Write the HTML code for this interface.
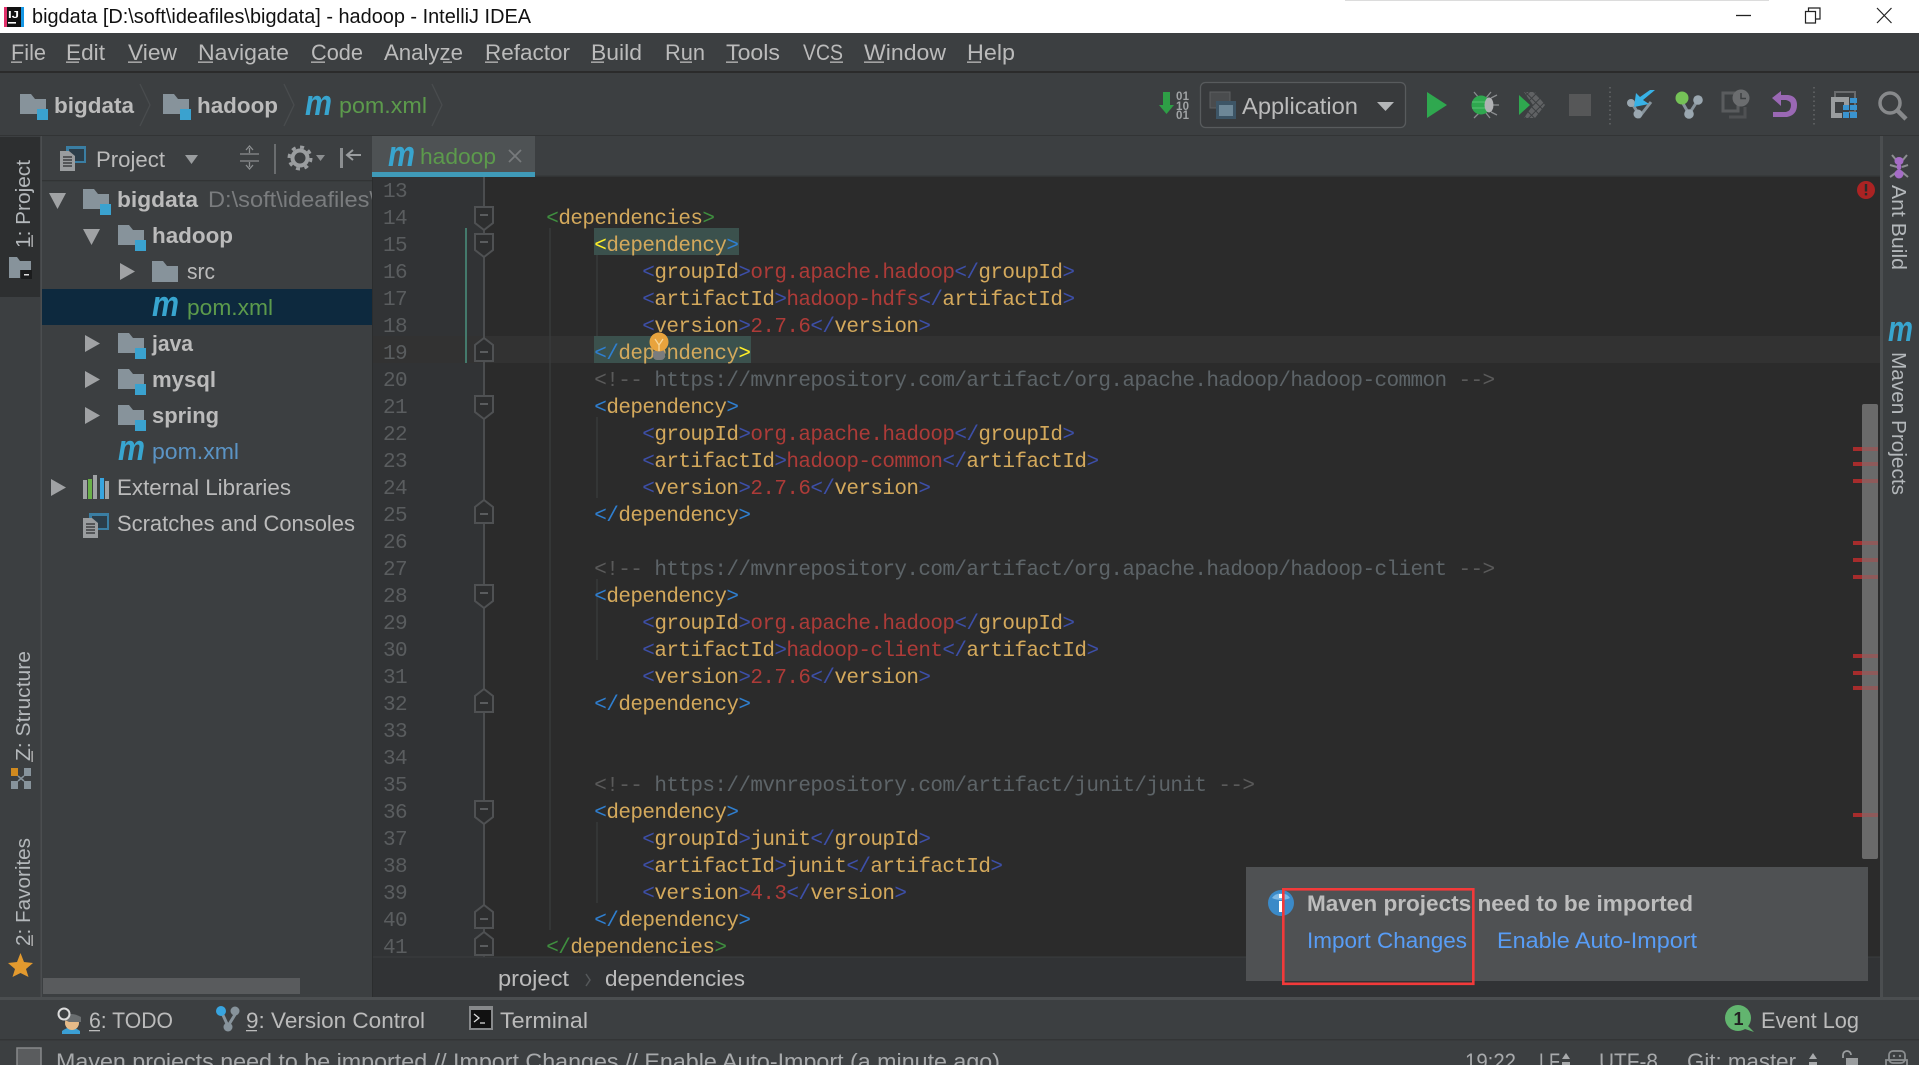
<!DOCTYPE html>
<html><head><meta charset="utf-8"><title>bigdata - hadoop - IntelliJ IDEA</title>
<style>
html,body{margin:0;padding:0;background:#3c3f41;width:1919px;height:1065px;overflow:hidden}
svg{display:block;filter:blur(.35px)}
text{font-family:"Liberation Sans",sans-serif;fill:#bbbbbb;font-size:22px;white-space:pre}
.b{font-weight:700}
.side{font-size:20px;fill:#b4b8bb}
.c{font-family:"Liberation Mono",monospace;font-size:21px;letter-spacing:-.6px;fill:#d4a95c}
.n{font-family:"Liberation Mono",monospace;font-size:21px;letter-spacing:-.6px;fill:#5a5d5f}
.g{fill:#3f8f3f}.bl{fill:#2f7fd0}.i{fill:#3d4fa8}.r{fill:#ad3b38}.y{fill:#ffef28}.k{fill:#5d6468}.kk{fill:#5a5a5a}
.m{font-style:italic;font-weight:700;font-size:36px;fill:#38a5cf}
.gf{fill:#5c9a4c}
</style></head>
<body>
<svg xmlns="http://www.w3.org/2000/svg" width="1919" height="1065" viewBox="0 0 1919 1065">
<defs>
<symbol id="fold" viewBox="0 0 28 27" width="28" height="27">
<path d="M0 1H11L15 6H26V16H17V21H0Z" fill="#87939b"/><rect x="17" y="16" width="11" height="11" fill="#3aa2cf"/>
</symbol>
<symbol id="pfold" viewBox="0 0 26 21" width="26" height="21">
<path d="M0 0H11L15 5H26V21H0Z" fill="#87939b"/>
</symbol>
<symbol id="scr" viewBox="0 0 27 26" width="27" height="26">
<rect x="6" y="1" width="20" height="17" fill="#3a7ea3"/><rect x="9" y="4" width="15" height="12" fill="#2c3e4a"/>
<path d="M0 6H9L15 11V26H0Z" fill="#9a9d9f"/><path d="M3 12H12M3 15H12M3 18H12M3 21H12" stroke="#3c3f41" stroke-width="1.5"/>
</symbol>
<symbol id="fs" viewBox="0 0 20 25" width="20" height="25">
<path d="M1 1H19V17L10 24L1 17Z" fill="#2d2e2f" stroke="#4f5153" stroke-width="2"/><path d="M6 9H14" stroke="#5a5c5e" stroke-width="2"/>
</symbol>
<symbol id="fe" viewBox="0 0 20 25" width="20" height="25">
<path d="M1 24H19V8L10 1L1 8Z" fill="#2d2e2f" stroke="#4f5153" stroke-width="2"/><path d="M6 15H14" stroke="#5a5c5e" stroke-width="2"/>
</symbol>
<pattern id="hatch" width="6" height="6" patternUnits="userSpaceOnUse" patternTransform="rotate(45)">
<rect width="6" height="6" fill="#606264"/><path d="M0 0H6M0 0V6" stroke="#3c3f41" stroke-width="2"/>
</pattern>
</defs>

<!-- title bar -->
<rect width="1919" height="33" fill="#fff"/>
<rect x="1345" y="0" width="424" height="1" fill="#dcdcdc"/>
<rect x="4" y="7" width="20" height="20" fill="#111"/>
<path d="M4 27V7h3v20z" fill="#e0306a"/><path d="M24 7v20h-3V7z" fill="#1597e5"/>
<text x="8" y="18" style="font-size:10px;fill:#fff;font-weight:700" textLength="11" lengthAdjust="spacingAndGlyphs">IJ</text>
<rect x="8" y="22" width="8" height="1.6" fill="#fff"/>
<text x="32" y="23" style="font-size:20px;fill:#111" textLength="499" lengthAdjust="spacingAndGlyphs">bigdata [D:\soft\ideafiles\bigdata] - hadoop - IntelliJ IDEA</text>
<path d="M1736 15.5H1751" stroke="#222" stroke-width="1.3"/>
<path d="M1805.5 11.5h10v11.5h-10zM1808.5 11.5v-3.5h11.5v11h-4" fill="none" stroke="#222" stroke-width="1.2"/>
<path d="M1877 8L1891.500 23M1891.500 8L1877 23" stroke="#222" stroke-width="1.2"/>

<!-- menu bar -->
<rect x="0" y="33" width="1919" height="39" fill="#3c3f41"/>
<rect x="0" y="71" width="1919" height="2" fill="#2b2b2b"/>
<g>
<text x="11" y="60" textLength="35" lengthAdjust="spacingAndGlyphs">File</text><rect x="11" y="61.500" width="11" height="1.300" fill="#bbb"/>
<text x="66" y="60" textLength="39" lengthAdjust="spacingAndGlyphs">Edit</text><rect x="66" y="61.500" width="13" height="1.300" fill="#bbb"/>
<text x="128" y="60" textLength="49" lengthAdjust="spacingAndGlyphs">View</text><rect x="128" y="61.500" width="14" height="1.300" fill="#bbb"/>
<text x="198" y="60" textLength="91" lengthAdjust="spacingAndGlyphs">Navigate</text><rect x="198" y="61.500" width="15" height="1.300" fill="#bbb"/>
<text x="311" y="60" textLength="52" lengthAdjust="spacingAndGlyphs">Code</text><rect x="311" y="61.500" width="14" height="1.300" fill="#bbb"/>
<text x="384" y="60" textLength="79" lengthAdjust="spacingAndGlyphs">Analyze</text><rect x="443" y="61.500" width="9" height="1.300" fill="#bbb"/>
<text x="485" y="60" textLength="85" lengthAdjust="spacingAndGlyphs">Refactor</text><rect x="485" y="61.500" width="13" height="1.300" fill="#bbb"/>
<text x="591" y="60" textLength="51" lengthAdjust="spacingAndGlyphs">Build</text><rect x="591" y="61.500" width="13" height="1.300" fill="#bbb"/>
<text x="665" y="60" textLength="40" lengthAdjust="spacingAndGlyphs">Run</text><rect x="680" y="61.500" width="12" height="1.300" fill="#bbb"/>
<text x="726" y="60" textLength="54" lengthAdjust="spacingAndGlyphs">Tools</text><rect x="726" y="61.500" width="12" height="1.300" fill="#bbb"/>
<text x="803" y="60" textLength="40" lengthAdjust="spacingAndGlyphs">VCS</text><rect x="830" y="61.500" width="13" height="1.300" fill="#bbb"/>
<text x="864" y="60" textLength="82" lengthAdjust="spacingAndGlyphs">Window</text><rect x="864" y="61.500" width="20" height="1.300" fill="#bbb"/>
<text x="967" y="60" textLength="48" lengthAdjust="spacingAndGlyphs">Help</text><rect x="967" y="61.500" width="14" height="1.300" fill="#bbb"/>
</g>

<!-- toolbar -->
<rect x="0" y="73" width="1919" height="62" fill="#3c3f41"/>
<rect x="0" y="135" width="1919" height="1.500" fill="#323435"/>
<use href="#fold" x="20" y="93"/>
<text x="54" y="113" class="b" textLength="80" lengthAdjust="spacingAndGlyphs">bigdata</text>
<path d="M140 84L150 105L140 126" fill="none" stroke="#494c4e" stroke-width="1.300"/>
<use href="#fold" x="163" y="93"/>
<text x="197" y="113" class="b" textLength="81" lengthAdjust="spacingAndGlyphs">hadoop</text>
<path d="M284 84L294 105L284 126" fill="none" stroke="#494c4e" stroke-width="1.300"/>
<text x="305" y="115" class="m" textLength="27" lengthAdjust="spacingAndGlyphs">m</text>
<text x="339" y="113" class="gf" textLength="88" lengthAdjust="spacingAndGlyphs">pom.xml</text>
<path d="M432 84L442 105L432 126" fill="none" stroke="#494c4e" stroke-width="1.300"/>

<path d="M1163 92h7v13h4l-7.500 9l-7.500 -9h4z" fill="#2e9e46"/>
<text x="1176" y="100" style="font-size:11.500px;font-weight:700;fill:#a0a3a5" textLength="13">01</text>
<text x="1176" y="110" style="font-size:11.500px;font-weight:700;fill:#a0a3a5" textLength="13">10</text>
<text x="1176" y="119" style="font-size:11.500px;font-weight:700;fill:#a0a3a5" textLength="13">01</text>

<rect x="1200.500" y="82.500" width="205" height="45" rx="5" fill="#383a3c" stroke="#585b5d" stroke-width="1.300"/>
<rect x="1210" y="92" width="20" height="16" fill="#4a4c4e" stroke="#5d5f61"/>
<rect x="1216" y="101" width="20" height="18" fill="#3d5566"/><rect x="1219" y="105" width="14" height="11" fill="#6d8797"/>
<text x="1242" y="114" textLength="116" lengthAdjust="spacingAndGlyphs" style="font-size:23px">Application</text>
<path d="M1377 102H1394L1385.500 111Z" fill="#b4b6b8"/>

<path d="M1427 92V118L1447 105Z" fill="#2fa84f"/>
<g>
<path d="M1474 92l5 6M1491 92l-5 6M1474 118l5 -5M1490 118l-4 -5M1491 98l6 -3M1493 105h6M1491 112l6 3" stroke="#8a8d8f" stroke-width="1.300" fill="none"/>
<circle cx="1481" cy="105" r="9.500" fill="#2fa84f"/>
<path d="M1472 102H1487M1472 108H1487" stroke="#57c273" stroke-width="1"/>
<ellipse cx="1489" cy="105" rx="4.500" ry="7.500" fill="#b0b2b4"/>
</g>
<path d="M1519 95V115L1530 105Z" fill="#2fa84f"/>
<path d="M1524 92H1535L1545 105L1535 118H1524L1533 105Z" fill="url(#hatch)"/>
<rect x="1569" y="94" width="22" height="22" fill="#565758"/>
<path d="M1610 87V125" stroke="#6a6d6f" stroke-width="1.300" stroke-dasharray="1.500 3"/>

<path d="M1631 102L1640 116L1651 102" stroke="#87939b" stroke-width="3" fill="none"/>
<circle cx="1631" cy="103" r="4" fill="#9aa7b0"/><circle cx="1638" cy="114" r="4.500" fill="#9aa7b0"/>
<path d="M1655 90L1643 100L1649 104L1634 107L1636 93L1640 97L1650 90Z" fill="#38b2e6"/>

<path d="M1681 100L1689 114L1698 100" stroke="#87939b" stroke-width="3" fill="none"/>
<circle cx="1682" cy="98" r="6.500" fill="#75c257"/><circle cx="1698" cy="100" r="4.800" fill="#9aa7b0"/><circle cx="1689" cy="114" r="4.800" fill="#9aa7b0"/>

<rect x="1723" y="93" width="15" height="18" fill="none" stroke="#5a5c5e" stroke-width="3"/>
<path d="M1729 117H1745V107" fill="none" stroke="#4f5153" stroke-width="3"/>
<circle cx="1741" cy="98" r="8.500" fill="#6b6d6f"/><path d="M1741 93V98.500H1746" stroke="#3c3f41" stroke-width="1.500" fill="none"/>

<path d="M1772 98L1781 91V95H1788Q1797 96 1797 105Q1797 115 1787 117H1773V112H1786Q1791 111 1791 105Q1791 101 1786 100H1781V106Z" fill="#9a68b4"/>
<path d="M1814 87V125" stroke="#6a6d6f" stroke-width="1.300" stroke-dasharray="1.500 3"/>

<rect x="1835" y="92" width="20" height="20" fill="none" stroke="#6a6c6e" stroke-width="2"/>
<rect x="1831" y="97" width="18" height="21" fill="#9a9d9f"/><rect x="1835" y="102" width="9" height="11" fill="#3c3f41"/>
<rect x="1842" y="108" width="7" height="10" fill="#3c3f41"/>
<path d="M1850 98h7v5h-7zM1850 105h7v5h-7zM1843 112h6v6h-6zM1850 112h7v6h-7zM1843 105h6v5h-6z" fill="#3a94d0"/>

<circle cx="1890" cy="103" r="10" fill="none" stroke="#87898b" stroke-width="3.500"/>
<path d="M1897 110L1906 119" stroke="#87898b" stroke-width="4.500"/>

<!-- left stripe -->
<rect x="0" y="136" width="41" height="864" fill="#3c3f41"/>
<rect x="0" y="137" width="40" height="160" fill="#2d2f30"/>
<rect x="40.500" y="136" width="1.500" height="864" fill="#4b4e50"/>
<text transform="translate(30,248) rotate(-90)" class="side" textLength="88" lengthAdjust="spacingAndGlyphs">1: Project</text>
<rect x="31.500" y="235" width="1.300" height="12" fill="#bbb"/>
<path d="M9 257H17L20 261H31V270H20V278H9Z" fill="#87939b"/><rect x="21" y="270" width="11" height="9" fill="#1b1c1d"/><rect x="24" y="274" width="5" height="1.500" fill="#ddd"/>

<text transform="translate(30,761) rotate(-90)" class="side" textLength="110" lengthAdjust="spacingAndGlyphs">Z: Structure</text>
<rect x="31.500" y="751" width="1.300" height="11" fill="#bbb"/>
<path d="M11 768h7v8h-7z" fill="#d08a1f"/><path d="M24 768h7v8h-7zM11 781h7v8h-7zM24 781h7v8h-7z" fill="#87939b"/><path d="M18 776l6 5M24 776l-6 5" stroke="#87939b" stroke-width="1.500"/>

<text transform="translate(30,946) rotate(-90)" class="side" textLength="108" lengthAdjust="spacingAndGlyphs">2: Favorites</text>
<rect x="31.500" y="935" width="1.300" height="11" fill="#bbb"/>
<path d="M20.500 953L24 962L33 963L26 969L28.500 977L20.500 973L12.500 977L15 969L8 963L17 962Z" fill="#e39a2e"/>

<!-- project panel -->
<rect x="42" y="136" width="330" height="861" fill="#3c3f41"/>
<rect x="42" y="180" width="330" height="1.300" fill="#323435"/>
<use href="#scr" x="60" y="145"/>
<text x="96" y="167" textLength="69" lengthAdjust="spacingAndGlyphs">Project</text>
<path d="M185 155H198L191.500 164Z" fill="#9a9d9f"/>
<path d="M240 154H259M240 161H259M249.500 148V153M249.500 162V167M246 150L249.500 146L253 150M246 165L249.500 169L253 165" stroke="#8b8e90" stroke-width="1.300" fill="none"/>
<rect x="274" y="144" width="2" height="30" fill="#6a6d6f"/>
<circle cx="300" cy="158" r="7.500" fill="none" stroke="#9a9d9f" stroke-width="4"/>
<circle cx="300" cy="158" r="11" fill="none" stroke="#9a9d9f" stroke-width="3" stroke-dasharray="4 4.600"/>
<path d="M316 155H325L320.500 161Z" fill="#8b8e90"/>
<rect x="340" y="148" width="3" height="20" fill="#8b8e90"/>
<path d="M361 155H348M353 150L347 155L353 160" stroke="#9a9d9f" stroke-width="2" fill="none"/>

<rect x="42" y="289" width="330" height="36" fill="#0d293e"/>
<path d="M49 193H66L57.500 209Z" fill="#a0a2a4"/>
<use href="#fold" x="83" y="188"/>
<text x="117" y="207" class="b" textLength="81" lengthAdjust="spacingAndGlyphs">bigdata</text>
<text x="208" y="207" style="fill:#7a7c7e" textLength="168" lengthAdjust="spacingAndGlyphs">D:\soft\ideafiles\</text>
<rect x="372" y="180" width="6" height="40" fill="#313335"/>
<path d="M83 229H100L91.500 245Z" fill="#a0a2a4"/>
<use href="#fold" x="118" y="224"/>
<text x="152" y="243" class="b" textLength="81" lengthAdjust="spacingAndGlyphs">hadoop</text>
<path d="M120 263V280L135 271.500Z" fill="#a0a2a4"/>
<use href="#pfold" x="152" y="261"/>
<text x="187" y="279" textLength="28" lengthAdjust="spacingAndGlyphs">src</text>
<text x="152" y="316" class="m" textLength="27" lengthAdjust="spacingAndGlyphs">m</text>
<text x="187" y="315" class="gf" textLength="86" lengthAdjust="spacingAndGlyphs">pom.xml</text>
<path d="M85 335V352L100 343.500Z" fill="#a0a2a4"/>
<use href="#fold" x="118" y="332"/>
<text x="152" y="351" class="b" textLength="41" lengthAdjust="spacingAndGlyphs">java</text>
<path d="M85 371V388L100 379.500Z" fill="#a0a2a4"/>
<use href="#fold" x="118" y="368"/>
<text x="152" y="387" class="b" textLength="64" lengthAdjust="spacingAndGlyphs">mysql</text>
<path d="M85 407V424L100 415.500Z" fill="#a0a2a4"/>
<use href="#fold" x="118" y="404"/>
<text x="152" y="423" class="b" textLength="67" lengthAdjust="spacingAndGlyphs">spring</text>
<text x="118" y="460" class="m" textLength="27" lengthAdjust="spacingAndGlyphs">m</text>
<text x="152" y="459" style="fill:#5b94c5" textLength="87" lengthAdjust="spacingAndGlyphs">pom.xml</text>
<path d="M51 479V496L66 487.500Z" fill="#a0a2a4"/>
<path d="M83 480h4v19h-4z" fill="#a0a3a5"/><path d="M88 479h4v20h-4z" fill="#6ab04a"/><path d="M93 475h4v24h-4z" fill="#a0a3a5"/><path d="M100 478h4v21h-4z" fill="#38a5e0"/><path d="M105 481h4v18h-4z" fill="#a0a3a5"/>
<text x="117" y="495" textLength="174" lengthAdjust="spacingAndGlyphs">External Libraries</text>
<use href="#scr" x="83" y="512"/>
<text x="117" y="531" textLength="238" lengthAdjust="spacingAndGlyphs">Scratches and Consoles</text>
<rect x="43" y="978" width="257" height="16" fill="#595b5d"/>

<!-- tabs -->
<rect x="372" y="136" width="1508" height="41" fill="#3c3f41"/>
<rect x="372" y="175.500" width="1508" height="1.500" fill="#323435"/>
<rect x="372" y="136" width="163" height="36" fill="#4e5254"/>
<rect x="372" y="172" width="163" height="5" fill="#3f9ab8"/>
<text x="388" y="166" class="m" textLength="27" lengthAdjust="spacingAndGlyphs">m</text>
<text x="420" y="164" class="gf" textLength="76" lengthAdjust="spacingAndGlyphs">hadoop</text>
<path d="M509 150L521 162M521 150L509 162" stroke="#777a7c" stroke-width="1.800"/>

<!-- editor -->
<rect x="372" y="177" width="1508" height="780" fill="#2b2b2b"/>
<rect x="372" y="177" width="112" height="780" fill="#313335"/>
<rect x="372" y="177" width="1" height="820" fill="#2b2d2e"/>
<rect x="372" y="336" width="1508" height="27" fill="#323232"/>
<path d="M484 177V957" stroke="#4b4d4f" stroke-width="2"/>
<rect x="465" y="228" width="2" height="135" fill="#447a6c"/>
<path d="M550 228V930" stroke="#3a3c3d" stroke-width="1.300"/>
<path d="M597 255V336M597 417V498M597 579V660M597 822V903" stroke="#3a3c3d" stroke-width="1.300"/>
<rect x="594" y="228" width="145" height="27" fill="#3b514d"/>
<rect x="594" y="336" width="157" height="27" fill="#3b514d"/>

<use href="#fs" x="474" y="206"/><use href="#fs" x="474" y="233"/><use href="#fe" x="474" y="337"/>
<use href="#fs" x="474" y="395"/><use href="#fe" x="474" y="499"/>
<use href="#fs" x="474" y="584"/><use href="#fe" x="474" y="688"/>
<use href="#fs" x="474" y="800"/><use href="#fe" x="474" y="904"/><use href="#fe" x="474" y="931"/>

<g transform="translate(0,-1)">
<text class="n" x="383" y="198">13</text><text class="n" x="383" y="225">14</text><text class="n" x="383" y="252">15</text><text class="n" x="383" y="279">16</text><text class="n" x="383" y="306">17</text><text class="n" x="383" y="333">18</text><text class="n" x="383" y="360">19</text><text class="n" x="383" y="387">20</text><text class="n" x="383" y="414">21</text><text class="n" x="383" y="441">22</text><text class="n" x="383" y="468">23</text><text class="n" x="383" y="495">24</text><text class="n" x="383" y="522">25</text><text class="n" x="383" y="549">26</text><text class="n" x="383" y="576">27</text><text class="n" x="383" y="603">28</text><text class="n" x="383" y="630">29</text><text class="n" x="383" y="657">30</text><text class="n" x="383" y="684">31</text><text class="n" x="383" y="711">32</text><text class="n" x="383" y="738">33</text><text class="n" x="383" y="765">34</text><text class="n" x="383" y="792">35</text><text class="n" x="383" y="819">36</text><text class="n" x="383" y="846">37</text><text class="n" x="383" y="873">38</text><text class="n" x="383" y="900">39</text><text class="n" x="383" y="927">40</text><text class="n" x="383" y="954">41</text>
</g>

<g transform="translate(-.7,-1)">
<text class="c" x="547" y="225"><tspan class="g">&lt;</tspan>dependencies<tspan class="g">&gt;</tspan></text>
<text class="c" x="595" y="252"><tspan class="y">&lt;</tspan>dependency<tspan class="bl">&gt;</tspan></text>
<text class="c" x="643" y="279"><tspan class="i">&lt;</tspan>groupId<tspan class="i">&gt;</tspan><tspan class="r">org.apache.hadoop</tspan><tspan class="i">&lt;/</tspan>groupId<tspan class="i">&gt;</tspan></text>
<text class="c" x="643" y="306"><tspan class="i">&lt;</tspan>artifactId<tspan class="i">&gt;</tspan><tspan class="r">hadoop-hdfs</tspan><tspan class="i">&lt;/</tspan>artifactId<tspan class="i">&gt;</tspan></text>
<text class="c" x="643" y="333"><tspan class="i">&lt;</tspan>version<tspan class="i">&gt;</tspan><tspan class="r">2.7.6</tspan><tspan class="i">&lt;/</tspan>version<tspan class="i">&gt;</tspan></text>
<text class="c" x="595" y="360"><tspan class="bl">&lt;/</tspan>dependency<tspan class="y">&gt;</tspan></text>
<text class="c k" x="595" y="387" style="fill:#5d6468"><tspan class="kk">&lt;!--</tspan> https://mvnrepository.com/artifact/org.apache.hadoop/hadoop-common <tspan class="kk">--&gt;</tspan></text>
<text class="c" x="595" y="414"><tspan class="bl">&lt;</tspan>dependency<tspan class="bl">&gt;</tspan></text>
<text class="c" x="643" y="441"><tspan class="i">&lt;</tspan>groupId<tspan class="i">&gt;</tspan><tspan class="r">org.apache.hadoop</tspan><tspan class="i">&lt;/</tspan>groupId<tspan class="i">&gt;</tspan></text>
<text class="c" x="643" y="468"><tspan class="i">&lt;</tspan>artifactId<tspan class="i">&gt;</tspan><tspan class="r">hadoop-common</tspan><tspan class="i">&lt;/</tspan>artifactId<tspan class="i">&gt;</tspan></text>
<text class="c" x="643" y="495"><tspan class="i">&lt;</tspan>version<tspan class="i">&gt;</tspan><tspan class="r">2.7.6</tspan><tspan class="i">&lt;/</tspan>version<tspan class="i">&gt;</tspan></text>
<text class="c" x="595" y="522"><tspan class="bl">&lt;/</tspan>dependency<tspan class="bl">&gt;</tspan></text>
<text class="c k" x="595" y="576" style="fill:#5d6468"><tspan class="kk">&lt;!--</tspan> https://mvnrepository.com/artifact/org.apache.hadoop/hadoop-client <tspan class="kk">--&gt;</tspan></text>
<text class="c" x="595" y="603"><tspan class="bl">&lt;</tspan>dependency<tspan class="bl">&gt;</tspan></text>
<text class="c" x="643" y="630"><tspan class="i">&lt;</tspan>groupId<tspan class="i">&gt;</tspan><tspan class="r">org.apache.hadoop</tspan><tspan class="i">&lt;/</tspan>groupId<tspan class="i">&gt;</tspan></text>
<text class="c" x="643" y="657"><tspan class="i">&lt;</tspan>artifactId<tspan class="i">&gt;</tspan><tspan class="r">hadoop-client</tspan><tspan class="i">&lt;/</tspan>artifactId<tspan class="i">&gt;</tspan></text>
<text class="c" x="643" y="684"><tspan class="i">&lt;</tspan>version<tspan class="i">&gt;</tspan><tspan class="r">2.7.6</tspan><tspan class="i">&lt;/</tspan>version<tspan class="i">&gt;</tspan></text>
<text class="c" x="595" y="711"><tspan class="bl">&lt;/</tspan>dependency<tspan class="bl">&gt;</tspan></text>
<text class="c k" x="595" y="792" style="fill:#5d6468"><tspan class="kk">&lt;!--</tspan> https://mvnrepository.com/artifact/junit/junit <tspan class="kk">--&gt;</tspan></text>
<text class="c" x="595" y="819"><tspan class="bl">&lt;</tspan>dependency<tspan class="bl">&gt;</tspan></text>
<text class="c" x="643" y="846"><tspan class="i">&lt;</tspan>groupId<tspan class="i">&gt;</tspan>junit<tspan class="i">&lt;/</tspan>groupId<tspan class="i">&gt;</tspan></text>
<text class="c" x="643" y="873"><tspan class="i">&lt;</tspan>artifactId<tspan class="i">&gt;</tspan>junit<tspan class="i">&lt;/</tspan>artifactId<tspan class="i">&gt;</tspan></text>
<text class="c" x="643" y="900"><tspan class="i">&lt;</tspan>version<tspan class="i">&gt;</tspan><tspan class="r">4.3</tspan><tspan class="i">&lt;/</tspan>version<tspan class="i">&gt;</tspan></text>
<text class="c" x="595" y="927"><tspan class="bl">&lt;/</tspan>dependency<tspan class="bl">&gt;</tspan></text>
<text class="c" x="547" y="954"><tspan class="g">&lt;/</tspan>dependencies<tspan class="g">&gt;</tspan></text>
</g>

<!-- bulb -->
<rect x="653" y="350" width="12" height="10" rx="4" fill="#7a7c7e"/>
<circle cx="659" cy="342" r="9.500" fill="#e8a33d"/>
<path d="M655 339L659 345L663 339M659 345V351" stroke="#f7d79a" stroke-width="1.300" fill="none"/>

<!-- error / scrollbar -->
<circle cx="1866" cy="190" r="9" fill="#ab2323"/>
<rect x="1864.800" y="184" width="2.400" height="7.500" fill="#2b2b2b"/><rect x="1864.800" y="193" width="2.400" height="2.400" fill="#2b2b2b"/>
<rect x="1862" y="404" width="16" height="455" rx="2" fill="#6a6a6a"/>
<g fill="#a62c2c">
<rect x="1853" y="447" width="9" height="4"/><rect x="1853" y="462" width="9" height="4"/><rect x="1853" y="479" width="9" height="4"/>
<rect x="1853" y="541" width="9" height="4"/><rect x="1853" y="558" width="9" height="4"/><rect x="1853" y="575" width="9" height="4"/>
<rect x="1853" y="654" width="9" height="4"/><rect x="1853" y="671" width="9" height="4"/><rect x="1853" y="686" width="9" height="4"/>
<rect x="1853" y="813" width="9" height="4"/>
</g>
<g fill="#8e5a5a">
<rect x="1862" y="447" width="16" height="4"/><rect x="1862" y="462" width="16" height="4"/><rect x="1862" y="479" width="16" height="4"/>
<rect x="1862" y="541" width="16" height="4"/><rect x="1862" y="558" width="16" height="4"/><rect x="1862" y="575" width="16" height="4"/>
<rect x="1862" y="654" width="16" height="4"/><rect x="1862" y="671" width="16" height="4"/><rect x="1862" y="686" width="16" height="4"/>
<rect x="1862" y="813" width="16" height="4"/>
</g>

<!-- breadcrumb -->
<rect x="372" y="957" width="1508" height="40" fill="#313335"/>
<rect x="372" y="956.500" width="1508" height="1" fill="#3a3c3e"/>
<rect x="372" y="180" width="1" height="817" fill="#2b2d2e"/>
<text x="498" y="986" textLength="71" lengthAdjust="spacingAndGlyphs">project</text>
<path d="M586 974L590 980L586 986" fill="none" stroke="#55585a" stroke-width="1.500"/>
<text x="605" y="986" textLength="140" lengthAdjust="spacingAndGlyphs">dependencies</text>

<!-- right stripe -->
<rect x="1880" y="136" width="39" height="864" fill="#3c3f41"/>
<rect x="1880" y="136" width="3" height="864" fill="#4b4e50"/>
<g>
<path d="M1892 155l5 6M1907 155l-5 6M1890 165l7 2M1908 165l-6 2M1890 177l7 -5M1908 177l-6 -5" stroke="#8d8f91" stroke-width="2" fill="none"/>
<ellipse cx="1899" cy="161" rx="4.500" ry="4" fill="#a56cc6"/><ellipse cx="1899" cy="167" rx="2.500" ry="3" fill="#a56cc6"/><ellipse cx="1899" cy="174" rx="4.500" ry="4.500" fill="#a56cc6"/>
</g>
<text transform="translate(1892,185) rotate(90)" class="side" textLength="85" lengthAdjust="spacingAndGlyphs">Ant Build</text>
<text x="1888" y="341" class="m" textLength="25" lengthAdjust="spacingAndGlyphs">m</text>
<text transform="translate(1892,352) rotate(90)" class="side" textLength="143" lengthAdjust="spacingAndGlyphs">Maven Projects</text>

<!-- notification -->
<rect x="1246" y="867" width="622" height="114" fill="#4f5153"/>
<circle cx="1281" cy="903" r="13" fill="#3b8ac8"/>
<path d="M1272 898a10 8 0 0 1 18 0a14 8 0 0 1 -18 0z" fill="#7db9e6"/>
<rect x="1279" y="901" width="4" height="11" fill="#fff"/><rect x="1279" y="894" width="4" height="4" fill="#fff"/>
<text x="1307" y="911" class="b" textLength="386" lengthAdjust="spacingAndGlyphs" style="fill:#bdbdbd">Maven projects need to be imported</text>
<text x="1307" y="948" style="fill:#589df6" textLength="160" lengthAdjust="spacingAndGlyphs">Import Changes</text>
<text x="1497" y="948" style="fill:#589df6" textLength="200" lengthAdjust="spacingAndGlyphs">Enable Auto-Import</text>
<rect x="1283.300" y="889.300" width="190" height="94.500" fill="none" stroke="#f23a3a" stroke-width="2.600"/>

<!-- tool window bar -->
<rect x="0" y="997" width="1919" height="3" fill="#4b4e50"/>
<rect x="0" y="1000" width="1919" height="39" fill="#3c3f41"/>
<rect x="0" y="1039" width="1919" height="1.500" fill="#333536"/>
<g>
<path d="M62 1031q9 -7 18 0v3h-18z" fill="#3b9fd4"/><circle cx="72" cy="1023" r="7" fill="#e6ba88"/><path d="M63 1019q6 -9 18 -2v5h-12z" fill="#6a6e70"/>
<circle cx="64" cy="1014" r="5.500" fill="#3c3f41" stroke="#ddd" stroke-width="2"/>
</g>
<text x="89" y="1028" textLength="84" lengthAdjust="spacingAndGlyphs">6: TODO</text><rect x="89" y="1030" width="11" height="1.300" fill="#bbb"/>
<path d="M222 1013L228 1026L236 1013" stroke="#87939b" stroke-width="3" fill="none"/>
<circle cx="221" cy="1011" r="5" fill="#38a5e0"/><circle cx="235" cy="1011" r="4.500" fill="#87939b"/><circle cx="228" cy="1027" r="4.500" fill="#87939b"/>
<text x="246" y="1028" textLength="179" lengthAdjust="spacingAndGlyphs">9: Version Control</text><rect x="246" y="1030" width="11" height="1.300" fill="#bbb"/>
<rect x="469" y="1006" width="24" height="24" fill="#87898b"/><rect x="471" y="1010" width="20" height="18" fill="#111"/>
<path d="M474 1014L479 1018L474 1022M480 1023H485" stroke="#ddd" stroke-width="1.300" fill="none"/>
<text x="500" y="1028" textLength="88" lengthAdjust="spacingAndGlyphs">Terminal</text>
<circle cx="1738" cy="1018" r="13" fill="#62b56f"/><path d="M1742 1028L1754 1032L1746 1024Z" fill="#62b56f"/>
<text x="1733.500" y="1025" class="b" style="font-size:18px;fill:#222">1</text>
<text x="1761" y="1028" textLength="98" lengthAdjust="spacingAndGlyphs">Event Log</text>

<!-- status bar -->
<rect x="0" y="1040.500" width="1919" height="24.500" fill="#3c3f41"/>
<rect x="17" y="1048" width="24" height="20" fill="#5a5c5e" stroke="#87898b" stroke-width="1.500"/>
<text x="56" y="1069" style="fill:#a8aaac" textLength="944" lengthAdjust="spacingAndGlyphs">Maven projects need to be imported // Import Changes // Enable Auto-Import (a minute ago)</text>
<text x="1465" y="1069" style="fill:#a8aaac" textLength="51" lengthAdjust="spacingAndGlyphs">19:22</text>
<text x="1539" y="1069" style="fill:#a8aaac" textLength="21" lengthAdjust="spacingAndGlyphs">LF</text>
<path d="M1562 1059L1566 1053L1570 1059ZM1562 1062H1570V1065H1562Z" fill="#a8aaac"/>
<text x="1599" y="1069" style="fill:#a8aaac" textLength="59" lengthAdjust="spacingAndGlyphs">UTF-8</text>
<text x="1687" y="1069" style="fill:#a8aaac" textLength="109" lengthAdjust="spacingAndGlyphs">Git: master</text>
<path d="M1809 1059L1813 1053L1817 1059ZM1809 1062H1817V1065H1809Z" fill="#a8aaac"/>
<path d="M1843 1058v-3a4 4 0 0 1 8 0" stroke="#9a9d9f" stroke-width="1.800" fill="none"/><rect x="1846" y="1058" width="12" height="8" fill="#9a9d9f"/>
<rect x="1889" y="1051" width="16" height="12" rx="4" fill="none" stroke="#8b8e90" stroke-width="1.800"/><rect x="1886" y="1060" width="21" height="6" fill="none" stroke="#8b8e90" stroke-width="1.800"/>
<circle cx="1894" cy="1056" r="1.200" fill="#8b8e90"/><circle cx="1900" cy="1056" r="1.200" fill="#8b8e90"/>
</svg>
</body></html>
